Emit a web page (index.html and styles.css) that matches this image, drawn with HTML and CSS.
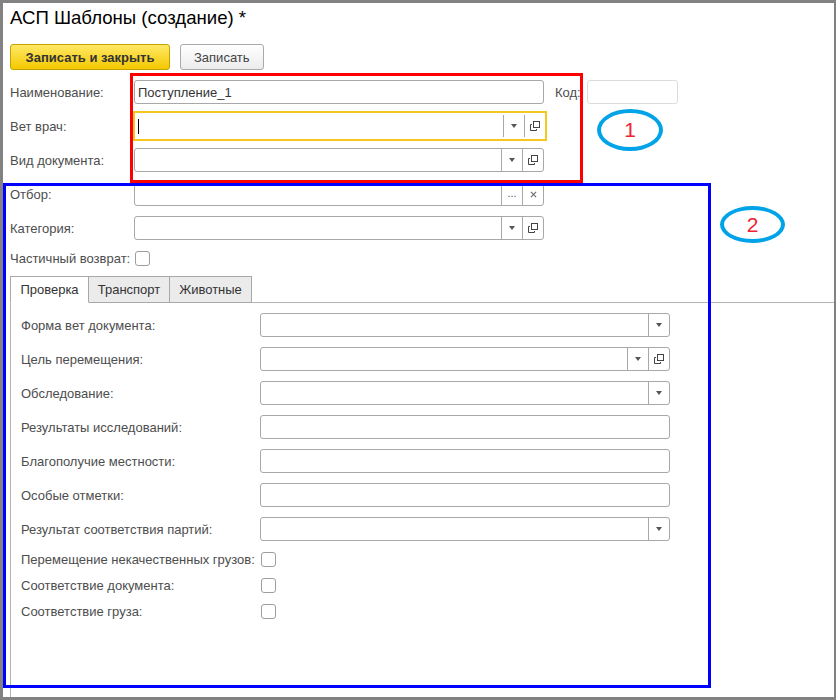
FILE: index.html
```html
<!DOCTYPE html>
<html lang="ru">
<head>
  <meta charset="UTF-8" />
  <title>АСП Шаблоны (создание)</title>
  <link rel="stylesheet" href="styles.css">
</head>
<body>
  <div class="window">
    <h1 class="title">АСП Шаблоны (создание) *</h1>

    <div class="toolbar">
      <button class="btn btn-main">Записать и закрыть</button>
      <button class="btn">Записать</button>
    </div>

    <div class="form">
      <div class="row">
        <span class="lbl">Наименование:</span>
        <div class="field"><span class="val">Поступление_1</span></div>
        <span class="lbl-code">Код:</span>
        <div class="field field-code"></div>
      </div>
      <div class="row">
        <span class="lbl">Вет врач:</span>
        <div class="field focus">
          <span class="val"><span class="caret"></span></span>
          <span class="fbtn"><span class="arrow"></span></span>
          <span class="fbtn"><svg class="open" viewBox="0 0 10 10"><rect x="3.5" y="0.5" width="6" height="6"/><path d="M2 3.5H0.5V9.5H6.5V8"/></svg></span>
        </div>
      </div>
      <div class="row">
        <span class="lbl">Вид документа:</span>
        <div class="field">
          <span class="val"></span>
          <span class="fbtn"><span class="arrow"></span></span>
          <span class="fbtn"><svg class="open" viewBox="0 0 10 10"><rect x="3.5" y="0.5" width="6" height="6"/><path d="M2 3.5H0.5V9.5H6.5V8"/></svg></span>
        </div>
      </div>
      <div class="row">
        <span class="lbl">Отбор:</span>
        <div class="field">
          <span class="val"></span>
          <span class="fbtn dots">...</span>
          <span class="fbtn"><svg class="clear" viewBox="0 0 8 8"><path d="M1 1L7 7M7 1L1 7"/></svg></span>
        </div>
      </div>
      <div class="row">
        <span class="lbl">Категория:</span>
        <div class="field">
          <span class="val"></span>
          <span class="fbtn"><span class="arrow"></span></span>
          <span class="fbtn"><svg class="open" viewBox="0 0 10 10"><rect x="3.5" y="0.5" width="6" height="6"/><path d="M2 3.5H0.5V9.5H6.5V8"/></svg></span>
        </div>
      </div>
      <div class="row row-check">
        <span class="lbl">Частичный возврат:</span>
        <span class="check"></span>
      </div>
    </div>

    <div class="tabs">
      <span class="tab active">Проверка</span>
      <span class="tab">Транспорт</span>
      <span class="tab">Животные</span>
    </div>

    <div class="panel">
      <div class="row">
        <span class="lbl">Форма вет документа:</span>
        <div class="field">
          <span class="val"></span>
          <span class="fbtn"><span class="arrow"></span></span>
        </div>
      </div>
      <div class="row">
        <span class="lbl">Цель перемещения:</span>
        <div class="field">
          <span class="val"></span>
          <span class="fbtn"><span class="arrow"></span></span>
          <span class="fbtn"><svg class="open" viewBox="0 0 10 10"><rect x="3.5" y="0.5" width="6" height="6"/><path d="M2 3.5H0.5V9.5H6.5V8"/></svg></span>
        </div>
      </div>
      <div class="row">
        <span class="lbl">Обследование:</span>
        <div class="field">
          <span class="val"></span>
          <span class="fbtn"><span class="arrow"></span></span>
        </div>
      </div>
      <div class="row">
        <span class="lbl">Результаты исследований:</span>
        <div class="field"></div>
      </div>
      <div class="row">
        <span class="lbl">Благополучие местности:</span>
        <div class="field"></div>
      </div>
      <div class="row">
        <span class="lbl">Особые отметки:</span>
        <div class="field"></div>
      </div>
      <div class="row">
        <span class="lbl">Результат соответствия партий:</span>
        <div class="field">
          <span class="val"></span>
          <span class="fbtn"><span class="arrow"></span></span>
        </div>
      </div>
      <div class="checks">
        <div class="row row-check">
          <span class="lbl">Перемещение некачественных грузов:</span>
          <span class="check"></span>
        </div>
        <div class="row row-check">
          <span class="lbl">Соответствие документа:</span>
          <span class="check"></span>
        </div>
        <div class="row row-check">
          <span class="lbl">Соответствие груза:</span>
          <span class="check"></span>
        </div>
      </div>
    </div>

    <!-- пометки поверх формы -->
    <div class="mark mark-red"></div>
    <div class="mark mark-blue"></div>
    <div class="oval oval-1">1</div>
    <div class="oval oval-2">2</div>
  </div>
</body>
</html>
```

FILE: styles.css
```css
* {
  box-sizing: border-box;
}

body {
  margin: 0;
  font-family: "Liberation Sans", Arial, sans-serif;
  font-size: 13px;
  color: #4d4d4d;
}

.window {
  position: relative;
  width: 836px;
  height: 700px;
  border: 3px solid #828282;
  border-right-width: 2px;
  display: flex;
  flex-direction: column;
  background: #fff;
  overflow: hidden;
}

.title {
  margin: 4px 0 0 7px;
  height: 22px;
  line-height: 22px;
  font-size: 18.6px;
  font-weight: normal;
  color: #000;
}

.toolbar {
  display: flex;
  gap: 10px;
  margin: 15px 0 0 7px;
  height: 26px;
}

.btn {
  font-family: inherit;
  font-size: 13px;
  color: #444;
  padding: 0 13px;
  height: 26px;
  border: 1px solid #a9a9a9;
  border-radius: 3px;
  background: linear-gradient(#ffffff, #ececec);
}

.btn-main {
  width: 160px;
  padding: 0;
  font-weight: bold;
  color: #333;
  border-color: #c2a300;
  background: linear-gradient(#ffe866, #f4c800);
}

.form {
  display: flex;
  flex-direction: column;
  gap: 10px;
  margin: 10px 0 0 7px;
}

.row {
  display: flex;
  align-items: center;
  height: 24px;
}

.row-check {
  height: 16px;
}

.lbl {
  width: 124px;
  flex-shrink: 0;
  white-space: nowrap;
}

.lbl-code {
  width: 32px;
  margin-left: 11px;
}

.field {
  display: flex;
  width: 410px;
  height: 24px;
  border: 1px solid #a8a8a8;
  border-radius: 3px;
  background: #fff;
}

.field-code {
  width: 91px;
  border-color: #dcdcdc;
}

.field.focus {
  border: 2px solid #f6c81e;
  border-radius: 0;
  height: 30px;
  width: 414px;
  margin: 0 -3px 0 -1px;
}

.field.focus .fbtn {
  margin: 2px 0;
}

.val {
  flex: 1;
  display: flex;
  align-items: center;
  padding-left: 3px;
  color: #333;
}

.caret {
  width: 1px;
  height: 15px;
  background: #000;
}

.fbtn {
  width: 21px;
  flex-shrink: 0;
  border-left: 1px solid #a8a8a8;
  display: flex;
  align-items: center;
  justify-content: center;
}

.arrow {
  width: 0;
  height: 0;
  border-top: 4px solid #555;
  border-left: 3px solid transparent;
  border-right: 3px solid transparent;
}

.open {
  width: 10px;
  height: 10px;
  fill: none;
  stroke: #444;
  stroke-width: 1;
}

.clear {
  width: 7px;
  height: 7px;
  stroke: #666;
  stroke-width: 1.2;
}

.dots {
  font-size: 11px;
  color: #555;
  padding-bottom: 2px;
}

.check {
  width: 15px;
  height: 15px;
  margin-left: 1px;
  border: 1px solid #9e9e9e;
  border-radius: 3px;
  background: #fff;
}

.tabs {
  display: flex;
  margin: 10px 0 0 7px;
  height: 26px;
  position: relative;
  z-index: 1;
}

.tab {
  display: flex;
  align-items: center;
  justify-content: center;
  height: 27px;
  color: #333;
  border: 1px solid #a8a8a8;
  border-left-width: 0;
  background: #ebebeb;
}

.tab.active {
  width: 79px;
  border-left-width: 1px;
  border-bottom-color: #fff;
  background: #fff;
}

.tab:nth-child(2) {
  width: 81px;
}

.tab:nth-child(3) {
  width: 82px;
}

.panel {
  flex: 1;
  margin-left: 7px;
  border-top: 1px solid #b4b4b4;
  border-left: 1px solid #b4b4b4;
  padding: 10px 0 0 10px;
  display: flex;
  flex-direction: column;
  gap: 10px;
}

.panel .lbl {
  width: 239px;
}

.checks {
  display: flex;
  flex-direction: column;
  gap: 10px;
}

.mark {
  position: absolute;
}

.mark-red {
  left: 127px;
  top: 70px;
  width: 453px;
  height: 110px;
  border: 3px solid #ff0000;
}

.mark-blue {
  left: 0;
  top: 180px;
  width: 708px;
  height: 505px;
  border: 3px solid #0000ff;
}

.oval {
  position: absolute;
  border: 4px solid #00a2e8;
  border-radius: 50%;
  color: #ee2233;
  font-size: 21px;
  display: flex;
  align-items: center;
  justify-content: center;
}

.oval-1 {
  left: 594px;
  top: 106px;
  width: 66px;
  height: 42px;
}

.oval-2 {
  left: 717px;
  top: 203px;
  width: 65px;
  height: 37px;
}
```
